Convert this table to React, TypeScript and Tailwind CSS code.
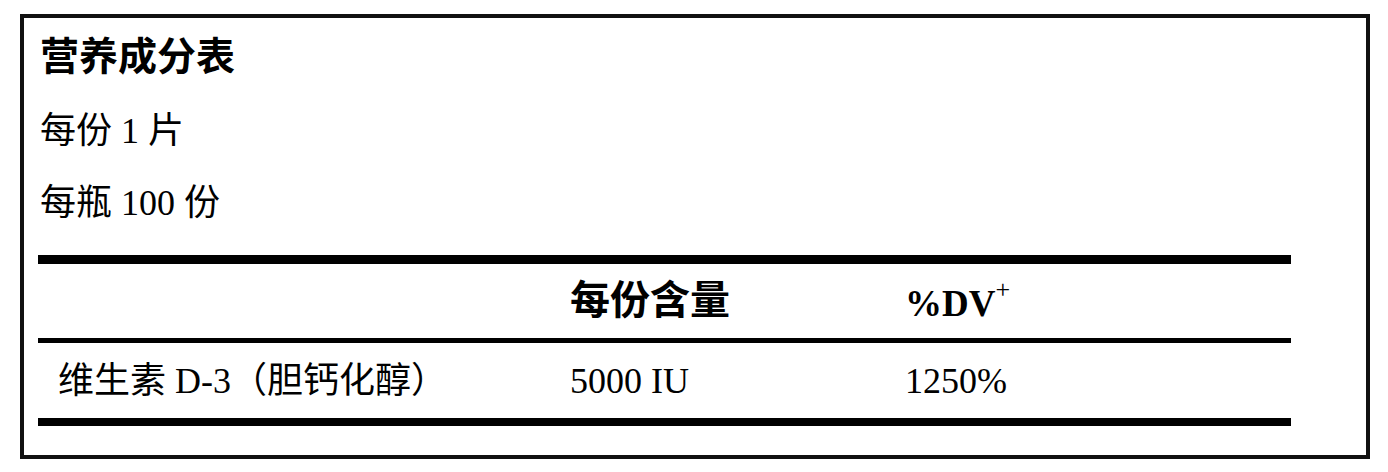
const font = { fontFamily: '"Liberation Serif", "Noto Sans CJK SC", serif' };

export default function App() {
  return (
    <div className="w-[1388px] h-[472px] bg-white pt-[14px] pl-[20px] text-black" style={font}>
      <div className="w-[1350px] h-[445px] border-4 border-[#111] pl-[14px]">
        <div className="pl-[2px] pt-[15px] h-[63px] text-[39px] font-bold leading-[48px]">营养成分表</div>
        <div className="pl-[2px] mt-[26px] h-[48px] text-[36px] leading-[48px]">每份 1 片</div>
        <div className="pl-[2px] mt-[24px] h-[48px] text-[36px] leading-[48px]">每瓶 100 份</div>

        <div className="mt-[28px] w-[1253px]">
          <div className="h-[9px] bg-black" />
          <div className="grid grid-cols-[532px_335px_1fr] h-[74px] items-center">
            <div />
            <div className="text-[40px] font-bold leading-none">每份含量</div>
            <div className="flex items-start text-[37px] font-bold leading-none">
              <span className="pt-[4px]">%DV</span>
              <span className="text-[26px] font-normal leading-none -mt-[4px]">+</span>
            </div>
          </div>
          <div className="h-[5px] bg-black" />
          <div className="grid grid-cols-[532px_335px_1fr] h-[75px] items-center text-[36px] leading-none">
            <div className="pl-[20px]">维生素 D-3（胆钙化醇）</div>
            <div>5000 IU</div>
            <div>1250%</div>
          </div>
          <div className="h-[8px] bg-black" />
        </div>
      </div>
    </div>
  );
}
